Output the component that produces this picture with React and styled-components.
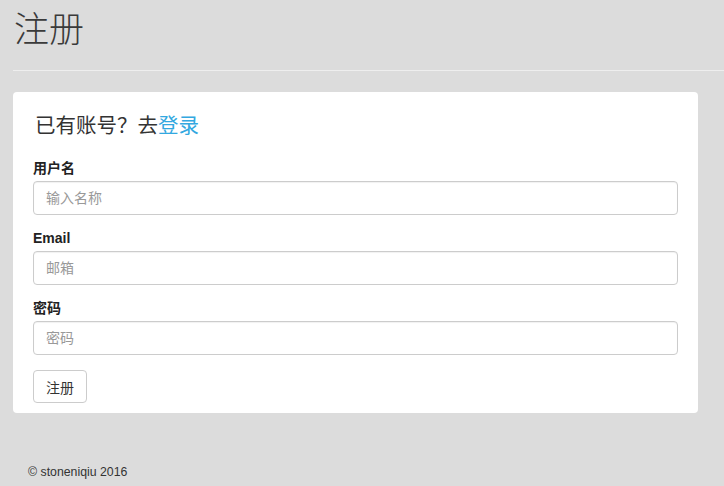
import React from 'react'
import styled, { createGlobalStyle } from 'styled-components'

const GlobalStyle = createGlobalStyle`
  html, body {
    margin: 0;
    padding: 0;
    background: #dcdcdc;
    font-family: "Liberation Sans", "Noto Sans CJK SC", sans-serif;
    color: #333;
    overflow: hidden;
  }
`

const Page = styled.div`
  min-height: 486px;
  padding-left: 13px;
`

const Title = styled.h1`
  margin: 0;
  padding: 11px 0 0 1px;
  font-family: "Liberation Serif", "Noto Sans CJK SC", serif;
  font-weight: 300;
  font-size: 35px;
  line-height: 40px;
  color: #3a3a3a;
`

const Divider = styled.hr`
  margin: 19px 0 21px;
  border: 0;
  border-top: 1px solid #eeeeee;
`

const Card = styled.div`
  width: 645px;
  padding: 20px 20px 10px;
  background: #fff;
  border-radius: 4px;
`

const Lead = styled.div`
  margin: 0 0 19px 2px;
  font-size: 20.5px;
  line-height: 28px;
  color: #333;
`

const Link = styled.a`
  color: #33a8e0;
  text-decoration: none;
`

const FormGroup = styled.div`
  margin-bottom: 14px;
`

const Label = styled.label`
  display: block;
  margin-bottom: 4px;
  font-size: 14px;
  font-weight: 700;
  line-height: 18px;
  color: #222;
`

const Input = styled.input`
  display: block;
  box-sizing: border-box;
  width: 100%;
  height: 34px;
  padding: 6px 12px;
  border: 1px solid #ccc;
  border-radius: 4px;
  font-family: inherit;
  font-size: 14px;
  color: #555;
  background: #fff;
  box-shadow: inset 0 1px 1px rgba(0, 0, 0, 0.06);

  &::placeholder {
    color: #999;
  }
`

const Button = styled.button`
  box-sizing: border-box;
  height: 33px;
  margin-top: 1px;
  padding: 6px 12px;
  border: 1px solid #ccc;
  border-radius: 4px;
  background: #fff;
  font-family: inherit;
  font-size: 14px;
  color: #333;
`

const Footer = styled.footer`
  margin-top: 51px;
  padding-left: 15px;
  font-size: 12.3px;
  line-height: 16px;
  color: #333;
`

const fields = [
  { label: '用户名', placeholder: '输入名称', type: 'text' },
  { label: 'Email', placeholder: '邮箱', type: 'email' },
  { label: '密码', placeholder: '密码', type: 'password' },
]

const App = () => (
  <>
    <GlobalStyle />
    <Page>
      <Title>注册</Title>
      <Divider />
      <Card>
        <Lead>
          已有账号？去<Link href="#">登录</Link>
        </Lead>
        <form onSubmit={(e) => e.preventDefault()}>
          {fields.map((f) => (
            <FormGroup key={f.label}>
              <Label>{f.label}</Label>
              <Input type={f.type} placeholder={f.placeholder} />
            </FormGroup>
          ))}
          <Button type="submit">注册</Button>
        </form>
      </Card>
      <Footer>© stoneniqiu 2016</Footer>
    </Page>
  </>
)

export default App
